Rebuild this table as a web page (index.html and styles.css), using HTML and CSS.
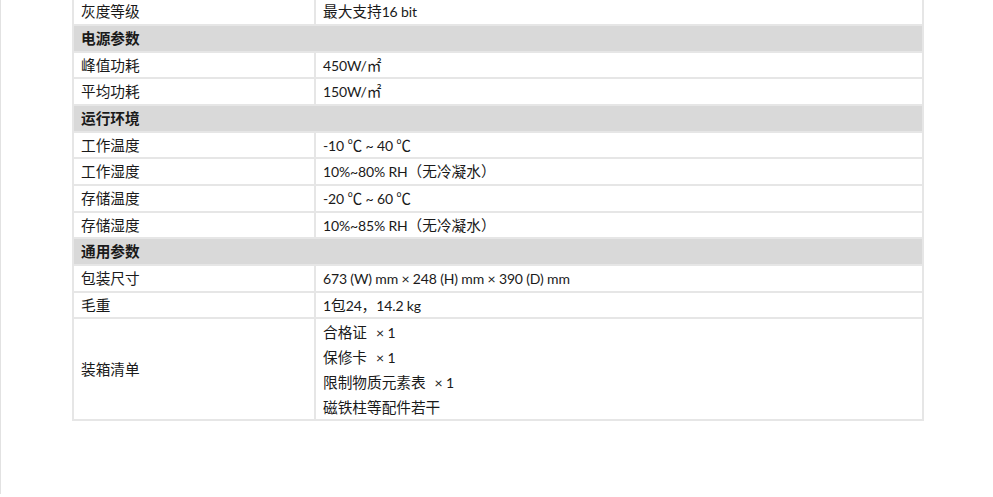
FILE: index.html
```html
<!DOCTYPE html>
<html lang="zh-CN">
<head>
<meta charset="utf-8">
<title>规格参数</title>
<link rel="stylesheet" href="styles.css">
</head>
<body>
<div class="page">
  <table class="spec">
    <colgroup><col class="c-key"><col class="c-val"></colgroup>
    <tbody>
      <tr><td>灰度等级</td><td>最大支持<span class="en">16 bit</span></td></tr>
      <tr class="group"><td colspan="2">电源参数</td></tr>
      <tr><td>峰值功耗</td><td><span class="en">450W/</span>㎡</td></tr>
      <tr><td>平均功耗</td><td><span class="en">150W/</span>㎡</td></tr>
      <tr class="group"><td colspan="2">运行环境</td></tr>
      <tr><td>工作温度</td><td><span class="en">-10 </span>℃<span class="en"> ~ 40 </span>℃</td></tr>
      <tr><td>工作湿度</td><td><span class="en">10%~80% RH</span>（无冷凝水）</td></tr>
      <tr><td>存储温度</td><td><span class="en">-20 </span>℃<span class="en"> ~ 60 </span>℃</td></tr>
      <tr><td>存储湿度</td><td><span class="en">10%~85% RH</span>（无冷凝水）</td></tr>
      <tr class="group"><td colspan="2">通用参数</td></tr>
      <tr><td>包装尺寸</td><td><span class="en">673 (W) mm × 248 (H) mm × 390 (D) mm</span></td></tr>
      <tr><td>毛重</td><td><span class="en">1</span>包<span class="en">24</span>，<span class="en">14.2 kg</span></td></tr>
      <tr>
        <td>装箱清单</td>
        <td class="list">
          <div class="line">合格证<span class="en gap">× 1</span></div>
          <div class="line">保修卡<span class="en gap">× 1</span></div>
          <div class="line">限制物质元素表<span class="en gap">× 1</span></div>
          <div class="line">磁铁柱等配件若干</div>
        </td>
      </tr>
    </tbody>
  </table>
</div>
</body>
</html>
```

FILE: styles.css
```css
html, body {
  margin: 0;
  padding: 0;
  background: #ffffff;
}

body {
  font-family: "Noto Sans CJK SC", sans-serif;
  font-size: 14.67px;
  color: #1a1a1a;
}

.en {
  font-family: "Lato", "Noto Sans CJK SC", sans-serif;
  font-size: 14px;
  letter-spacing: -0.15px;
  line-height: 0;
}

.gap {
  margin-left: 9px;
}

.page {
  min-height: 497px;
  box-sizing: border-box;
  border-left: 1px solid #e2e2e2;
  padding-left: 71px;
}

.spec {
  width: 850px;
  border-collapse: collapse;
  margin-top: -2.6px;
  table-layout: fixed;
}

.c-key { width: 242px; }
.c-val { width: 608px; }

.spec td {
  border: 2px solid #e6e6e6;
  padding: 0 7px;
  height: 24.67px;
  line-height: 24.67px;
  vertical-align: middle;
  white-space: nowrap;
}

.group td {
  background: #d9d9d9;
  font-weight: bold;
}

.line {
  height: 25px;
  line-height: 25px;
}
```
